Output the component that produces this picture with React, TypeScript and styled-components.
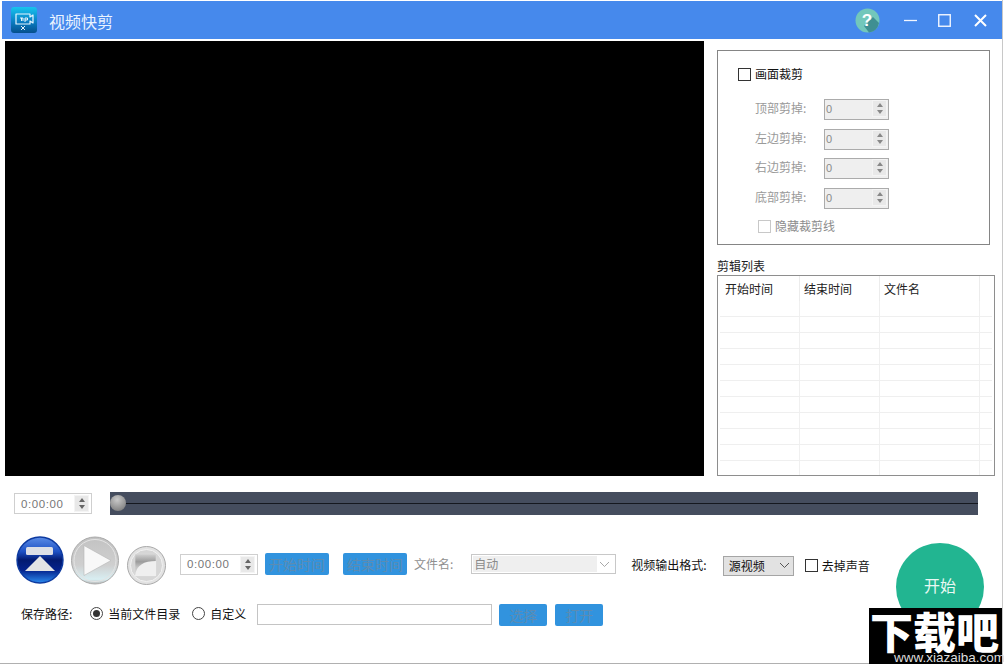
import React from "react";
import styled, { createGlobalStyle } from "styled-components";

const Global = createGlobalStyle`
  html, body { margin: 0; padding: 0; background: #fff; overflow: hidden; }
  * { box-sizing: border-box; }
  body { font-family: "Noto Sans CJK SC", "Liberation Sans", sans-serif; font-size: 12px; color: #111; }
`;

const Page = styled.div`
  position: relative;
  width: 1004px;
  height: 664px;
  background: #fff;
  overflow: hidden;
`;
const Window = styled.div`
  width: 1003px;
  height: 664px;
  padding: 1px 0 0 2px;
  border-right: 1px solid #c8c8c8;
  border-bottom: 1px solid #b0b0b0;
  display: flex;
  flex-direction: column;
`;
const TitleBar = styled.header`
  height: 38px;
  flex: none;
  background: #4689ec;
  display: flex;
  align-items: center;
  padding-left: 9px;
  color: #eaf3ff;
`;
const AppTitle = styled.span`
  font-size: 16px;
  margin-left: 12px;
  margin-top: 1px;
`;
const TitleActions = styled.div`
  margin-left: auto;
  display: flex;
  align-items: center;
  padding-right: 15px;
`;
const WinButton = styled.span<{ $gap?: number }>`
  display: flex;
  margin-left: ${(p) => p.$gap ?? 0}px;
`;
const Main = styled.div`
  display: flex;
  height: 435px;
  margin-top: 2px;
  flex: none;
  padding-left: 3px;
`;
const Video = styled.div`
  width: 699px;
  height: 435px;
  background: #000;
  flex: none;
`;
const Side = styled.aside`
  margin-left: 13px;
  padding-top: 9px;
  width: 278px;
  display: flex;
  flex-direction: column;
`;
const CropBox = styled.section`
  width: 273px;
  height: 195px;
  border: 1px solid #858585;
  padding: 15px 0 0 20px;
`;
const CheckRow = styled.label<{ $disabled?: boolean; $indent?: number; $top?: number }>`
  display: flex;
  align-items: center;
  gap: 4px;
  height: 16px;
  margin-left: ${(p) => p.$indent ?? 0}px;
  margin-top: ${(p) => p.$top ?? 0}px;
  color: ${(p) => (p.$disabled ? "#8c8c8c" : "#111")};
  line-height: 16px;
`;
const CheckBox = styled.span<{ $disabled?: boolean }>`
  width: 13px;
  height: 13px;
  flex: none;
  background: #fff;
  border: 1px solid ${(p) => (p.$disabled ? "#c8c8c8" : "#333")};
`;
const CropFields = styled.div`
  display: flex;
  flex-direction: column;
  gap: 9px;
  margin-top: 17px;
  padding-left: 17px;
`;
const CropField = styled.div`
  display: flex;
  align-items: center;
  height: 21px;
  &:nth-child(3) { margin-top: -1px; }
`;
const CropLabel = styled.span`
  width: 69px;
  color: #9a9a9a;
  margin-bottom: 4px;
`;
const DisabledNumber = styled.div`
  width: 65px;
  height: 21px;
  border: 1px solid #ababab;
  background: #efefef;
  display: flex;
  align-items: center;
  justify-content: space-between;
  padding: 0 1px 2px 1px;
  color: #8a8a8a;
  font-family: "Liberation Sans", sans-serif;
  font-size: 11px;
`;
const Stepper = styled.span`
  display: flex;
  flex-direction: column;
  width: 15px;
  height: 17px;
  background: #e8e8e8;
  border: 1px solid #f4f4f4;
  align-items: center;
  justify-content: center;
  gap: 3px;
`;
const Up = styled.i<{ $dark?: boolean }>`
  width: 0;
  height: 0;
  border-left: 3px solid transparent;
  border-right: 3px solid transparent;
  border-bottom: 4px solid ${(p) => (p.$dark ? "#666" : "#888")};
`;
const Down = styled(Up)`
  border-bottom: 0;
  border-top: 4px solid ${(p) => (p.$dark ? "#666" : "#888")};
`;
const ListTitle = styled.div`
  margin-top: 13px;
  height: 17px;
  line-height: 16px;
  color: #222;
`;
const ListBox = styled.div`
  width: 278px;
  height: 201px;
  border: 1px solid #8e8e8e;
  padding: 0 2px 1px 2px;
  display: flex;
  flex-direction: column;
  overflow: hidden;
`;
const ListHead = styled.div`
  display: grid;
  grid-template-columns: 80px 80px 100px 15px;
  height: 25px;
  flex: none;
`;
const HeadCell = styled.div`
  padding-left: 5px;
  line-height: 26px;
  color: #222;
  border-right: 1px solid #ececec;
  &:nth-child(n + 2) { padding-left: 4px; }
  &:last-child { border-right: 0; }
`;
const ListBody = styled.div`
  flex: 1;
  display: flex;
  flex-direction: column;
  padding-top: 15px;
`;
const ListRow = styled.div`
  display: grid;
  grid-template-columns: 80px 80px 100px 15px;
  height: 16px;
  flex: none;
  border-top: 1px solid #efefef;
`;
const ListRowTall = styled.div`
  display: grid;
  grid-template-columns: 80px 80px 100px 15px;
  height: 15px;
  margin-top: -15px;
  flex: none;
`;
const RowCell = styled.div`
  border-right: 1px solid #f0f0f0;
  &:last-child { border-right: 0; }
`;
const SeekRow = styled.div`
  display: flex;
  align-items: center;
  height: 23px;
  margin-top: 16px;
  padding-left: 12px;
  flex: none;
`;
const TimeBox = styled.div`
  width: 78px;
  height: 21px;
  border: 1px solid #cfcfcf;
  display: flex;
  align-items: center;
  justify-content: space-between;
  padding: 0 2px 0 6px;
  color: #777;
  font-family: "Liberation Sans", sans-serif;
  font-size: 11.5px;
  letter-spacing: 0.6px;
  flex: none;
`;
const Seek = styled.div`
  position: relative;
  margin-left: 18px;
  width: 868px;
  height: 23px;
  background: #454d5e;
  display: flex;
  align-items: center;
`;
const SeekLine = styled.div`
  width: 100%;
  height: 1px;
  background: #15181f;
`;
const Thumb = styled.div`
  position: absolute;
  left: 0;
  top: 3px;
  width: 16px;
  height: 16px;
  border-radius: 50%;
  background: radial-gradient(circle at 45% 30%, #c9c9c9, #8f8f8f 65%, #6e6e6e);
`;
const Bottom = styled.div`
  display: flex;
  flex: none;
`;
const BottomLeft = styled.div`
  width: 878px;
  display: flex;
  flex-direction: column;
`;
const ControlRow = styled.div`
  display: flex;
  align-items: center;
  height: 50px;
  margin-top: 20px;
  padding-left: 14px;
`;
const ControlGroup = styled.div`
  display: flex;
  align-items: center;
  padding-top: 8px;
  margin-left: 14px;
`;
const RoundIcon = styled.span<{ $left?: number; $top?: number }>`
  display: flex;
  flex: none;
  margin-left: ${(p) => p.$left ?? 0}px;
  margin-top: ${(p) => p.$top ?? 0}px;
`;
const ActionButton = styled.button<{ $w: number; $left: number }>`
  width: ${(p) => p.$w}px;
  height: 22px;
  margin-left: ${(p) => p.$left}px;
  border: 0;
  border-radius: 2px;
  background: #3193de;
  color: #5b8cb3;
  font-family: inherit;
  font-size: 14px;
  line-height: 20px;
  padding: 0;
  flex: none;
`;
const MutedLabel = styled.span<{ $left: number }>`
  margin-left: ${(p) => p.$left}px;
  margin-bottom: 2px;
  color: #8f8f8f;
  flex: none;
`;
const DarkLabel = styled.span<{ $left: number }>`
  margin-left: ${(p) => p.$left}px;
  margin-top: 1px;
  color: #111;
  flex: none;
`;
const NameSelect = styled.div`
  width: 145px;
  height: 20px;
  margin-left: 18px;
  border: 1px solid #c8c8c8;
  display: flex;
  align-items: center;
  padding: 1px 5px 1px 1px;
  color: #8a8a8a;
  flex: none;
`;
const NameValue = styled.div`
  width: 124px;
  height: 16px;
  line-height: 16px;
  background: #efefef;
  padding-left: 1px;
`;
const ChevronSlot = styled.span`
  margin-left: auto;
  display: flex;
`;
const FormatSelect = styled.div`
  width: 71px;
  height: 20px;
  margin-left: 16px;
  margin-top: 3px;
  border: 1px solid #a5a5a5;
  background: #e2e2e2;
  display: flex;
  align-items: center;
  justify-content: space-between;
  padding: 0 3px 0 5px;
  color: #111;
  flex: none;
`;
const SoundOption = styled.div`
  margin-top: 3px;
  flex: none;
`;
const SaveRow = styled.div`
  display: flex;
  align-items: center;
  height: 22px;
  margin-top: 19px;
  padding-left: 19px;
`;
const SaveText = styled.span`
  margin-bottom: 4px;
  flex: none;
`;
const Radio = styled.span<{ $left: number; $on?: boolean }>`
  width: 13px;
  height: 13px;
  margin-left: ${(p) => p.$left}px;
  margin-right: 5px;
  margin-bottom: 4px;
  border-radius: 50%;
  border: 1px solid #444;
  background: #fff;
  flex: none;
  display: flex;
  align-items: center;
  justify-content: center;
  &::after {
    content: "";
    width: 7px;
    height: 7px;
    border-radius: 50%;
    background: ${(p) => (p.$on ? "#333" : "transparent")};
  }
`;
const PathInput = styled.div`
  width: 235px;
  height: 21px;
  margin-left: 11px;
  margin-bottom: 1px;
  border: 1px solid #c4c4c4;
  flex: none;
`;
const StartWrap = styled.div`
  padding: 28px 0 0 16px;
`;
const StartButton = styled.button`
  width: 88px;
  height: 88px;
  border: 0;
  border-radius: 50%;
  background: #22b591;
  color: #e9f8f3;
  font-family: inherit;
  font-size: 16px;
  padding: 0 0 4px;
`;
const Watermark = styled.div`
  position: absolute;
  left: 869px;
  top: 608px;
  width: 133px;
  height: 56px;
  background: #000;
  color: #fff;
`;
const WatermarkMark = styled.div`
  font-size: 43px;
  font-weight: 900;
  line-height: 44px;
  padding-left: 1px;
  white-space: nowrap;
`;
const WatermarkUrl = styled.div`
  position: absolute;
  left: 25px;
  bottom: 0;
  font-family: "Liberation Sans", sans-serif;
  font-size: 13.5px;
  line-height: 12px;
  height: 12px;
  color: #ddd;
`;

const AppLogo = () => (
  <svg width="26" height="26" viewBox="0 0 26 26">
    <defs>
      <linearGradient id="lg" x1="0" y1="0" x2="0" y2="1">
        <stop offset="0" stopColor="#17c5ee" />
        <stop offset="0.55" stopColor="#0a7fc4" />
        <stop offset="1" stopColor="#054f8d" />
      </linearGradient>
    </defs>
    <rect width="26" height="26" rx="3" fill="url(#lg)" />
    <path d="M5 7h14v3l3-2v8l-3-2v3H5z" fill="none" stroke="#e6f6ff" strokeWidth="1.2" strokeLinejoin="round" />
    <path d="M9 11h3v3M10.500 11v3M14 11h2.500v2H14M14 11v4M10 19l4 4M14 19l-4 4" fill="none" stroke="#fff" strokeWidth="0.9" />
  </svg>
);
const HelpIcon = () => (
  <svg width="25" height="25" viewBox="0 0 25 25">
    <circle cx="12.5" cy="12.5" r="12" fill="#72c7bb" />
    <path d="M9 18l5 6.500a12 12 0 0 0 10-9.500l-6-6z" fill="#3f8f92" />
    <text x="12" y="18" textAnchor="middle" fontFamily="Liberation Sans" fontWeight="700" fontSize="17" fill="#fff">?</text>
  </svg>
);
const MinIcon = () => (
  <svg width="14" height="14" viewBox="0 0 14 14"><path d="M0 7.500h13" stroke="#f2f6ff" strokeWidth="1.3" /></svg>
);
const MaxIcon = () => (
  <svg width="13" height="13" viewBox="0 0 13 13"><rect x="0.75" y="0.75" width="11.5" height="11.5" fill="none" stroke="#f2f6ff" strokeWidth="1.4" /></svg>
);
const CloseIcon = () => (
  <svg width="13" height="13" viewBox="0 0 13 13"><path d="M1 1l11 11M12 1L1 12" stroke="#fff" strokeWidth="2" /></svg>
);
const EjectIcon = () => (
  <svg width="48" height="48" viewBox="0 0 48 48">
    <defs>
      <linearGradient id="ej" x1="0" y1="0" x2="0" y2="1">
        <stop offset="0" stopColor="#5c8de6" />
        <stop offset="0.32" stopColor="#1c50c4" />
        <stop offset="0.5" stopColor="#021a70" />
        <stop offset="0.72" stopColor="#04228c" />
        <stop offset="1" stopColor="#2c8cf0" />
      </linearGradient>
    </defs>
    <circle cx="24" cy="24" r="23" fill="url(#ej)" stroke="#0d3aa0" strokeWidth="1.4" />
    <rect x="10" y="11" width="27" height="8" rx="1.5" fill="#dcdfe6" />
    <path d="M24 20l15 15H9z" fill="#e4e4e4" />
  </svg>
);
const PlayIcon = () => (
  <svg width="48" height="49" viewBox="0 0 48 49">
    <defs>
      <linearGradient id="pl" x1="0" y1="0" x2="0" y2="1">
        <stop offset="0" stopColor="#c2c2c2" />
        <stop offset="0.6" stopColor="#cfcfcf" />
        <stop offset="0.9" stopColor="#d8eef2" />
        <stop offset="1" stopColor="#b8b8b8" />
      </linearGradient>
    </defs>
    <circle cx="24" cy="24.500" r="23.500" fill="url(#pl)" stroke="#a9a9a9" />
    <circle cx="24" cy="24.500" r="21" fill="none" stroke="#e4e4e4" />
    <path d="M13 9.500l27 15-27 15z" fill="#f8f8f8" stroke="#b5b5b5" strokeWidth="0.6" strokeLinejoin="round" />
  </svg>
);
const StopIcon = () => (
  <svg width="39" height="39" viewBox="0 0 39 39">
    <defs>
      <linearGradient id="st" x1="0" y1="0" x2="0" y2="1">
        <stop offset="0" stopColor="#d2d2d2" />
        <stop offset="0.35" stopColor="#9c9c9c" />
        <stop offset="0.6" stopColor="#c4c4c4" />
        <stop offset="1" stopColor="#d8d8d8" />
      </linearGradient>
    </defs>
    <circle cx="19.500" cy="19.500" r="19" fill="#e2e2e2" stroke="#a9a9a9" />
    <circle cx="19.500" cy="19.500" r="16" fill="#d6d6d6" stroke="#f2f2f2" />
    <rect x="8" y="8" width="21" height="22" rx="1" fill="url(#st)" stroke="#dcdcdc" strokeWidth="0.6" />
    <path d="M8 30c1-11 9-15 21-15v15z" fill="#efefef" />
  </svg>
);
const Chevron = ({ color }: { color: string }) => (
  <svg width="11" height="7" viewBox="0 0 11 7"><path d="M1 1l4.500 4.500L10 1" fill="none" stroke={color} strokeWidth="1" /></svg>
);

const cropLabels = ["顶部剪掉:", "左边剪掉:", "右边剪掉:", "底部剪掉:"];
const rows = Array.from({ length: 10 }, (_, i) => i);

function TimeSpinner() {
  return (
    <TimeBox>
      0:00:00
      <Stepper><Up $dark /><Down $dark /></Stepper>
    </TimeBox>
  );
}

export default function App() {
  return (
    <Page>
      <Global />
      <Window>
        <TitleBar>
          <AppLogo />
          <AppTitle>视频快剪</AppTitle>
          <TitleActions>
            <HelpIcon />
            <WinButton $gap={24}><MinIcon /></WinButton>
            <WinButton $gap={20}><MaxIcon /></WinButton>
            <WinButton $gap={23}><CloseIcon /></WinButton>
          </TitleActions>
        </TitleBar>
        <Main>
          <Video />
          <Side>
            <CropBox>
              <CheckRow><CheckBox />画面裁剪</CheckRow>
              <CropFields>
                {cropLabels.map((t) => (
                  <CropField key={t}>
                    <CropLabel>{t}</CropLabel>
                    <DisabledNumber>0<Stepper><Up /><Down /></Stepper></DisabledNumber>
                  </CropField>
                ))}
              </CropFields>
              <CheckRow $disabled $indent={20} $top={9}><CheckBox $disabled />隐藏裁剪线</CheckRow>
            </CropBox>
            <ListTitle>剪辑列表</ListTitle>
            <ListBox>
              <ListHead>
                <HeadCell>开始时间</HeadCell>
                <HeadCell>结束时间</HeadCell>
                <HeadCell>文件名</HeadCell>
                <HeadCell />
              </ListHead>
              <ListBody>
                <ListRowTall><RowCell /><RowCell /><RowCell /><RowCell /></ListRowTall>
                {rows.map((i) => (
                  <ListRow key={i}><RowCell /><RowCell /><RowCell /><RowCell /></ListRow>
                ))}
              </ListBody>
            </ListBox>
          </Side>
        </Main>
        <SeekRow>
          <TimeSpinner />
          <Seek><SeekLine /><Thumb /></Seek>
        </SeekRow>
        <Bottom>
          <BottomLeft>
            <ControlRow>
              <RoundIcon><EjectIcon /></RoundIcon>
              <RoundIcon $left={7}><PlayIcon /></RoundIcon>
              <RoundIcon $left={8} $top={10}><StopIcon /></RoundIcon>
              <ControlGroup>
                <TimeSpinner />
                <ActionButton $w={64} $left={7}>开始时间</ActionButton>
                <ActionButton $w={64} $left={14}>结束时间</ActionButton>
                <MutedLabel $left={7}>文件名:</MutedLabel>
                <NameSelect>
                  <NameValue>自动</NameValue>
                  <ChevronSlot><Chevron color="#a8a8a8" /></ChevronSlot>
                </NameSelect>
                <DarkLabel $left={15}>视频输出格式:</DarkLabel>
                <FormatSelect>源视频<Chevron color="#555" /></FormatSelect>
                <SoundOption>
                  <CheckRow $indent={11}><CheckBox />去掉声音</CheckRow>
                </SoundOption>
              </ControlGroup>
            </ControlRow>
            <SaveRow>
              <SaveText>保存路径:</SaveText>
              <Radio $left={18} $on />
              <SaveText>当前文件目录</SaveText>
              <Radio $left={12} />
              <SaveText>自定义</SaveText>
              <PathInput />
              <ActionButton $w={48} $left={7}>选择</ActionButton>
              <ActionButton $w={48} $left={8}>打开</ActionButton>
            </SaveRow>
          </BottomLeft>
          <StartWrap>
            <StartButton>开始</StartButton>
          </StartWrap>
        </Bottom>
      </Window>
      <Watermark>
        <WatermarkMark>下载吧</WatermarkMark>
        <WatermarkUrl>www.xiazaiba.com</WatermarkUrl>
      </Watermark>
    </Page>
  );
}
